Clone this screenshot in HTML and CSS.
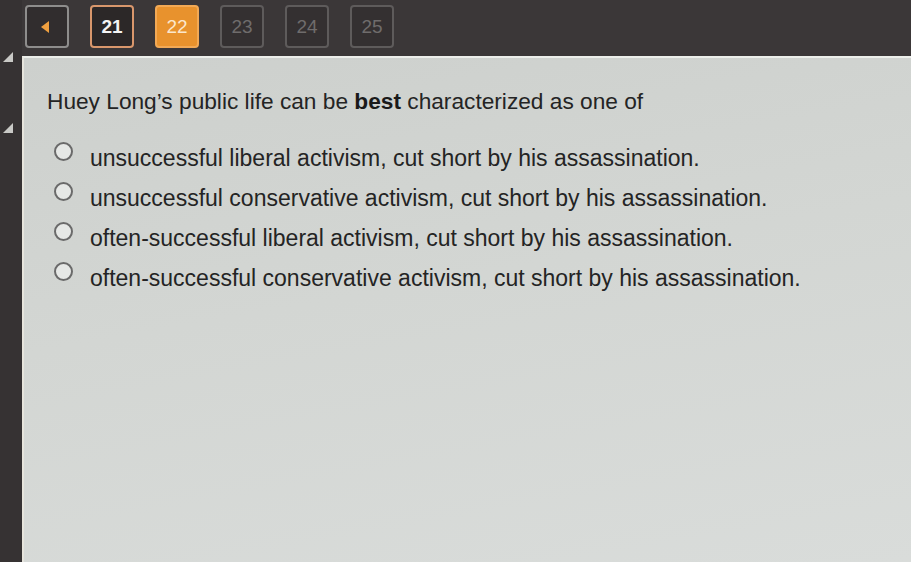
FILE: index.html
```html
<!DOCTYPE html>
<html lang="en">
<head>
<meta charset="utf-8">
<title>Question 22</title>
<link rel="stylesheet" href="styles.css">
</head>
<body>
<div class="app">
  <aside class="rail">
    <span class="marker"></span>
    <span class="marker"></span>
  </aside>
  <div class="main">
    <nav class="topbar">
      <button class="qbtn back" aria-label="Previous"><span class="tri"></span></button>
      <button class="qbtn done">21</button>
      <button class="qbtn current">22</button>
      <button class="qbtn">23</button>
      <button class="qbtn">24</button>
      <button class="qbtn">25</button>
    </nav>
    <section class="panel">
      <p class="question">Huey Long’s public life can be <b>best</b> characterized as one of</p>
      <ul class="options">
        <li><span class="radio"></span><span>unsuccessful liberal activism, cut short by his assassination.</span></li>
        <li><span class="radio"></span><span>unsuccessful conservative activism, cut short by his assassination.</span></li>
        <li><span class="radio"></span><span>often-successful liberal activism, cut short by his assassination.</span></li>
        <li><span class="radio"></span><span>often-successful conservative activism, cut short by his assassination.</span></li>
      </ul>
    </section>
  </div>
</div>
</body>
</html>
```

FILE: styles.css
```css
html, body {
  margin: 0;
  padding: 0;
  height: 100%;
}
body {
  background: #3a3637;
  font-family: "Liberation Sans", Arial, sans-serif;
  overflow: hidden;
}
.app {
  display: flex;
  height: 100vh;
}
.rail {
  width: 22px;
  flex: none;
  display: flex;
  flex-direction: column;
  align-items: flex-start;
  gap: 61px;
  padding-top: 52px;
  padding-left: 3px;
  box-sizing: border-box;
  background: #363233;
}
.marker {
  width: 0;
  height: 0;
  border-left: 10px solid transparent;
  border-bottom: 10px solid #c9c9c6;
}
.main {
  flex: 1;
  display: flex;
  flex-direction: column;
  min-width: 0;
}
.topbar {
  height: 56px;
  flex: none;
  display: flex;
  align-items: flex-start;
  gap: 21px;
  padding: 5px 0 0 3px;
  box-sizing: border-box;
  background: #3b3738;
}
.qbtn {
  width: 44px;
  height: 43px;
  box-sizing: border-box;
  border: 2px solid #5e5b5b;
  border-radius: 4px;
  background: #343031;
  color: #6f6c6c;
  font-family: "Liberation Sans", Arial, sans-serif;
  font-size: 19px;
  padding: 0;
  display: flex;
  align-items: center;
  justify-content: center;
}
.qbtn.back {
  border-color: #8e8d8c;
  background: #312d2e;
}
.tri {
  width: 0;
  height: 0;
  border-top: 6px solid transparent;
  border-bottom: 6px solid transparent;
  border-right: 8px solid #f0a040;
  margin-right: 4px;
}
.qbtn.done {
  border-color: #d9976c;
  background: #2c2828;
  color: #f4f4f4;
  font-weight: bold;
}
.qbtn.current {
  border-color: #f2a955;
  background: #e8922d;
  color: #fbe7cc;
}
.panel {
  flex: 1;
  background: linear-gradient(170deg, #cdd0cd 0%, #d3d6d3 45%, #d9dcda 100%);
  border-top: 2px solid #eceeea;
  border-left: 2px solid #e6e4dc;
  box-sizing: border-box;
  padding: 28px 0 0 23px;
  color: #242424;
}
.question {
  margin: 0;
  font-size: 22.7px;
  line-height: 30px;
}
.question b {
  color: #1a1a1a;
}
.options {
  list-style: none;
  margin: 27px 0 0 7px;
  padding: 0;
  display: flex;
  flex-direction: column;
  gap: 10px;
}
.options li {
  display: flex;
  align-items: center;
  gap: 17px;
  font-size: 23px;
  line-height: 30px;
}
.radio {
  width: 19px;
  height: 19px;
  box-sizing: border-box;
  border: 2px solid #6a6a6a;
  border-radius: 50%;
  background: #e6e8e6;
  flex: none;
  margin-top: -14px;
}
```
